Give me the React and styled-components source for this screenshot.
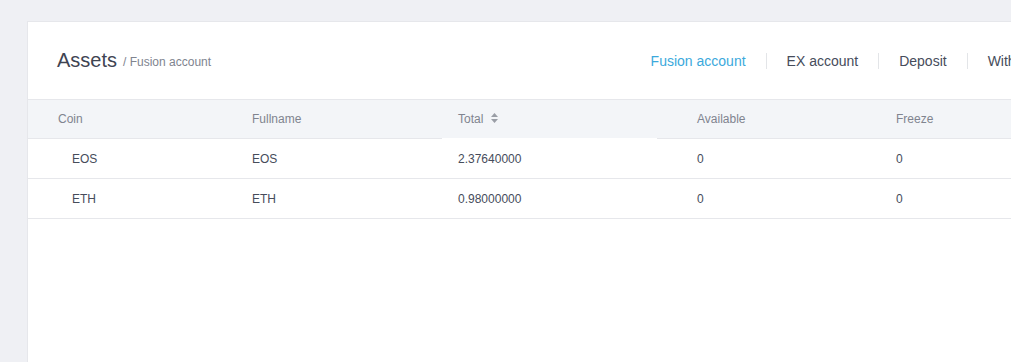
import styled, { createGlobalStyle } from 'styled-components'

const GlobalStyle = createGlobalStyle`
  html, body {
    margin: 0;
    padding: 0;
    background: #eff0f4;
    font-family: "Liberation Sans", Arial, sans-serif;
    overflow: hidden;
  }
`;

const Page = styled.div`
  padding: 21px 0 0 27px;
  height: 362px;
  box-sizing: border-box;
`;

const Card = styled.div`
  width: 1070px;
  min-height: 420px;
  box-sizing: border-box;
  background: #fff;
  border: 1px solid #e6e7eb;
`;

const Header = styled.div`
  display: flex;
  align-items: center;
  height: 77px;
  padding: 0 30px 0 29px;
`;

const Title = styled.h2`
  margin: 0;
  font-size: 20px;
  font-weight: normal;
  color: #3f4452;
`;

const SubTitle = styled.span`
  font-size: 12px;
  color: #80848f;
  margin-left: 6px;
  margin-top: 3px;
`;

const Nav = styled.nav`
  display: flex;
  align-items: center;
  margin-left: auto;
`;

const NavItem = styled.a`
  font-size: 14px;
  padding: 0 20px;
  color: ${p => (p.$active ? '#3ba9dc' : '#464c5b')};
  cursor: pointer;
`;

const Separator = styled.span`
  width: 1px;
  height: 16px;
  background: #e3e5e8;
`;

const Row = styled.div`
  display: grid;
  grid-template-columns: 194px 220px 215px 209px 1fr;
  box-sizing: border-box;
  height: ${p => (p.$head ? '40px' : '40px')};
  border-bottom: 1px solid #e6e7eb;
  background: ${p => (p.$head ? '#f3f5f8' : '#fff')};
  border-top: ${p => (p.$head ? '1px solid #e6e7eb' : 'none')};
`;

const Cell = styled.div`
  display: flex;
  align-items: center;
  padding-left: ${p => p.$pad}px;
  font-size: 12px;
  color: ${p => (p.$head ? '#80848f' : '#464c5b')};
  margin-bottom: ${p => (p.$sorted ? '-1px' : '0')};
  border-bottom: ${p => (p.$sorted ? '1px solid #fff' : 'none')};
`;

const SortIcon = styled.svg`
  margin-left: 8px;
  margin-top: -3px;
`;

const Sort = () => (
  <SortIcon width="7" height="10" viewBox="0 0 7 10">
    <path d="M3.5 0 L7 4 H0 Z" fill="#9a9ea6" />
    <path d="M3.5 10 L7 6 H0 Z" fill="#9a9ea6" />
  </SortIcon>
);

const pads = [30, 30, 16, 40, 30];
const headers = ['Coin', 'Fullname', 'Total', 'Available', 'Freeze'];
const rows = [
  ['EOS', 'EOS', '2.37640000', '0', '0'],
  ['ETH', 'ETH', '0.98000000', '0', '0'],
];

const App = () => (
  <Page>
    <GlobalStyle />
    <Card>
      <Header>
        <Title>Assets</Title>
        <SubTitle>/ Fusion account</SubTitle>
        <Nav>
          <NavItem $active>Fusion account</NavItem>
          <Separator />
          <NavItem>EX account</NavItem>
          <Separator />
          <NavItem>Deposit</NavItem>
          <Separator />
          <NavItem>Withdraw</NavItem>
        </Nav>
      </Header>
      <Row $head>
        {headers.map((h, i) => (
          <Cell key={h} $head $pad={pads[i]} $sorted={h === 'Total'}>
            {h}
            {h === 'Total' && <Sort />}
          </Cell>
        ))}
      </Row>
      {rows.map(r => (
        <Row key={r[0]}>
          {r.map((v, i) => (
            <Cell key={i} $pad={i === 0 ? 44 : pads[i]}>{v}</Cell>
          ))}
        </Row>
      ))}
    </Card>
  </Page>
);

export default App;
